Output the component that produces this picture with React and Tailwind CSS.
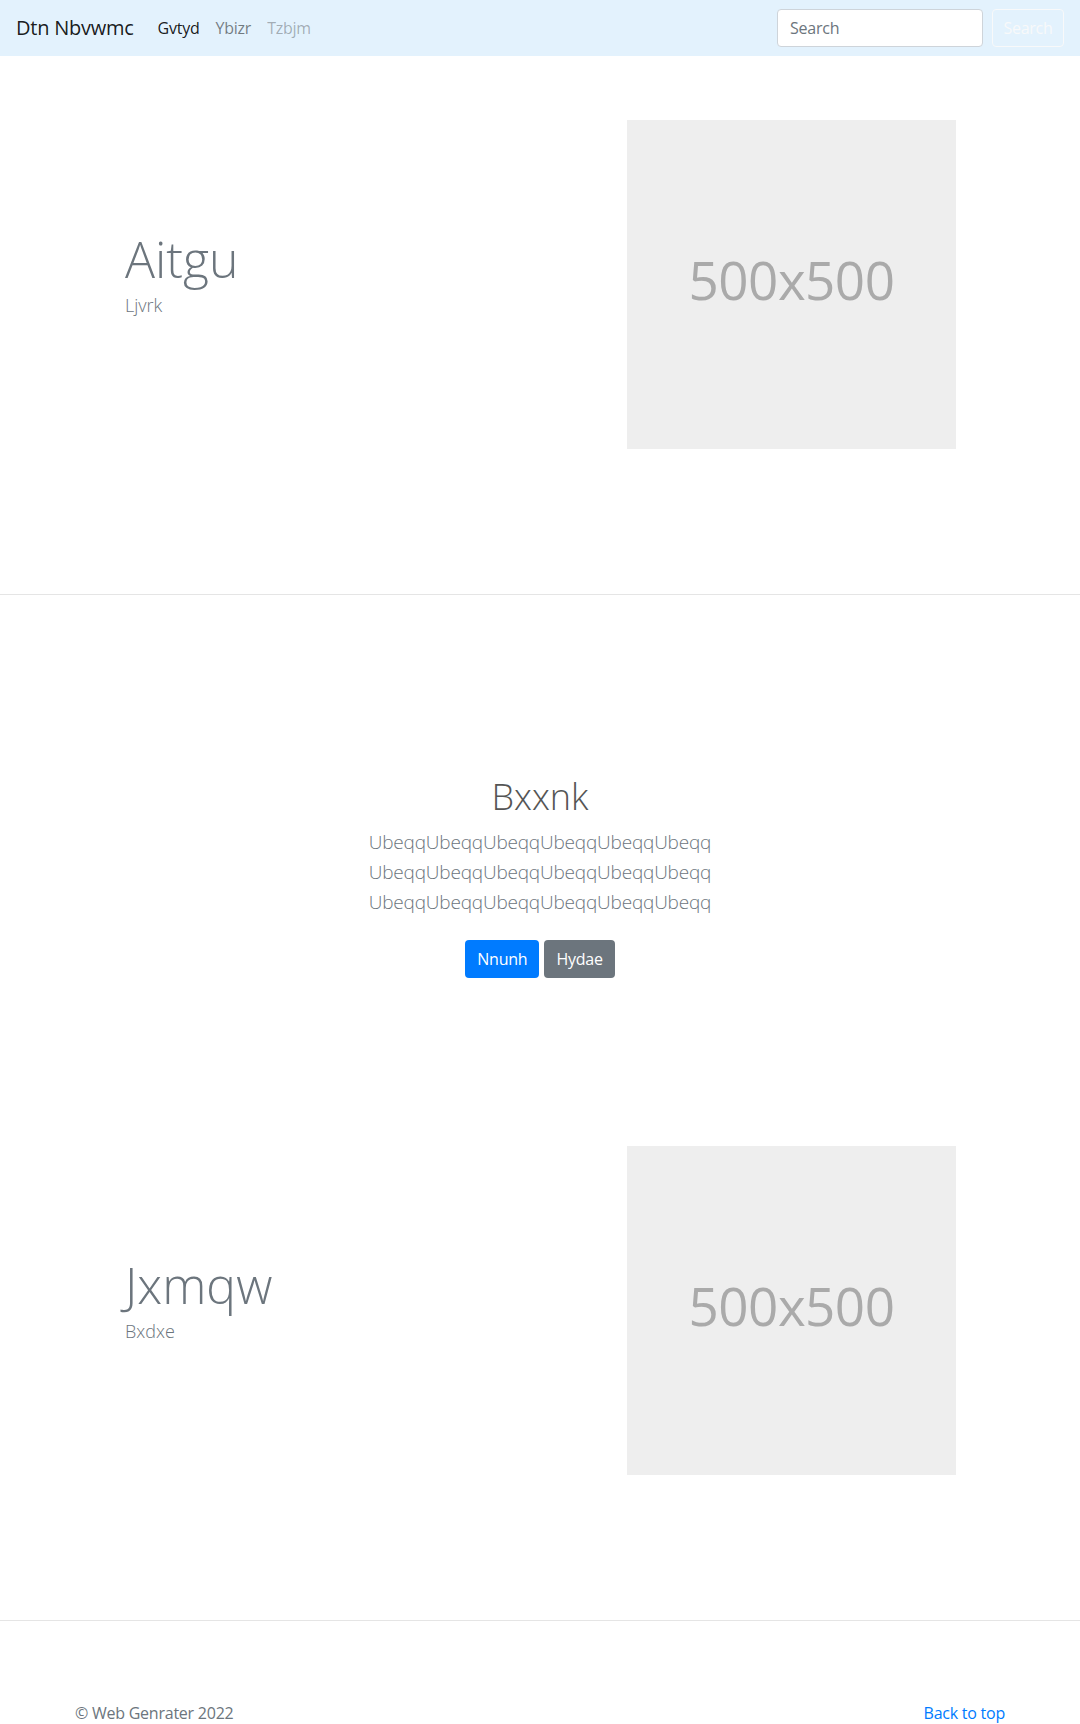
import React from 'react';

const font = { fontFamily: '"Open Sans", "Noto Sans", Arial, sans-serif' };

function Placeholder() {
  return (
    <div className="w-[329px] h-[329px] bg-[#eeeeee] flex items-center justify-center shrink-0">
      <span className="text-[53px] leading-none tracking-[-0.01em] text-[#aaaaaa] mb-[10px]">500x500</span>
    </div>
  );
}

function Feature({ title, subtitle }) {
  return (
    <section className="border-b border-[#e5e5e5] pt-16 pb-[145px]">
      <div className="w-[930px] mx-auto flex items-center justify-between pl-[50px] pr-[49px]">
        <div className="pb-[22px]">
          <h1 className="text-[50px] leading-[1.2] font-light tracking-normal text-[#6c757d] mb-[3px]">{title}</h1>
          <p className="text-[18px] leading-[1.5] font-light tracking-normal text-[#6c757d]">{subtitle}</p>
        </div>
        <Placeholder />
      </div>
    </section>
  );
}

export default function App() {
  return (
    <div style={font} className="min-h-screen bg-white text-[#212529] tracking-[-0.015em]">
      {/* Navbar */}
      <nav className="h-14 bg-[#e3f2fd] flex items-center px-4">
        <a className="text-[20px] text-black/90 mr-4">Dtn Nbvwmc</a>
        <ul className="flex items-center text-[16px]">
          <li className="px-2 text-black/90">Gvtyd</li>
          <li className="px-2 text-black/50">Ybizr</li>
          <li className="px-2 text-black/30">Tzbjm</li>
        </ul>
        <div className="ml-auto flex items-center gap-[9px]">
          <input
            placeholder="Search"
            className="w-[206px] h-[38px] px-3 bg-white border border-[#ced4da] rounded text-[16px] placeholder:text-[#6c757d] outline-none"
          />
          <button className="w-[72px] h-[38px] border border-[#f8f9fa] rounded text-[#f8f9fa] text-[16px]">
            Search
          </button>
        </div>
      </nav>

      <Feature title="Aitgu" subtitle="Ljvrk" />

      {/* Centered block */}
      <section className="pt-[180px] pb-[104px] text-center">
        <h1 className="text-[36px] leading-[1.2] font-light tracking-normal text-[#555555] mb-[9px]">Bxxnk</h1>
        <p className="text-[19px] leading-[30px] font-light tracking-[-0.01em] text-[#6c757d] mb-[23px]">
          <span className="block">UbeqqUbeqqUbeqqUbeqqUbeqqUbeqq</span>
          <span className="block">UbeqqUbeqqUbeqqUbeqqUbeqqUbeqq</span>
          <span className="block">UbeqqUbeqqUbeqqUbeqqUbeqqUbeqq</span>
        </p>
        <div className="flex justify-center gap-[5px]">
          <button className="h-[38px] px-3 rounded bg-[#007bff] text-white text-[16px]">Nnunh</button>
          <button className="h-[38px] px-3 rounded bg-[#6c757d] text-white text-[16px]">Hydae</button>
        </div>
      </section>

      <Feature title="Jxmqw" subtitle="Bxdxe" />

      {/* Footer */}
      <footer className="pt-[80px] pb-12">
        <div className="w-[930px] mx-auto flex justify-between text-[16px] leading-6">
          <p className="text-[#6c757d]">© Web Genrater 2022</p>
          <a className="text-[#007bff]">Back to top</a>
        </div>
      </footer>
    </div>
  );
}
